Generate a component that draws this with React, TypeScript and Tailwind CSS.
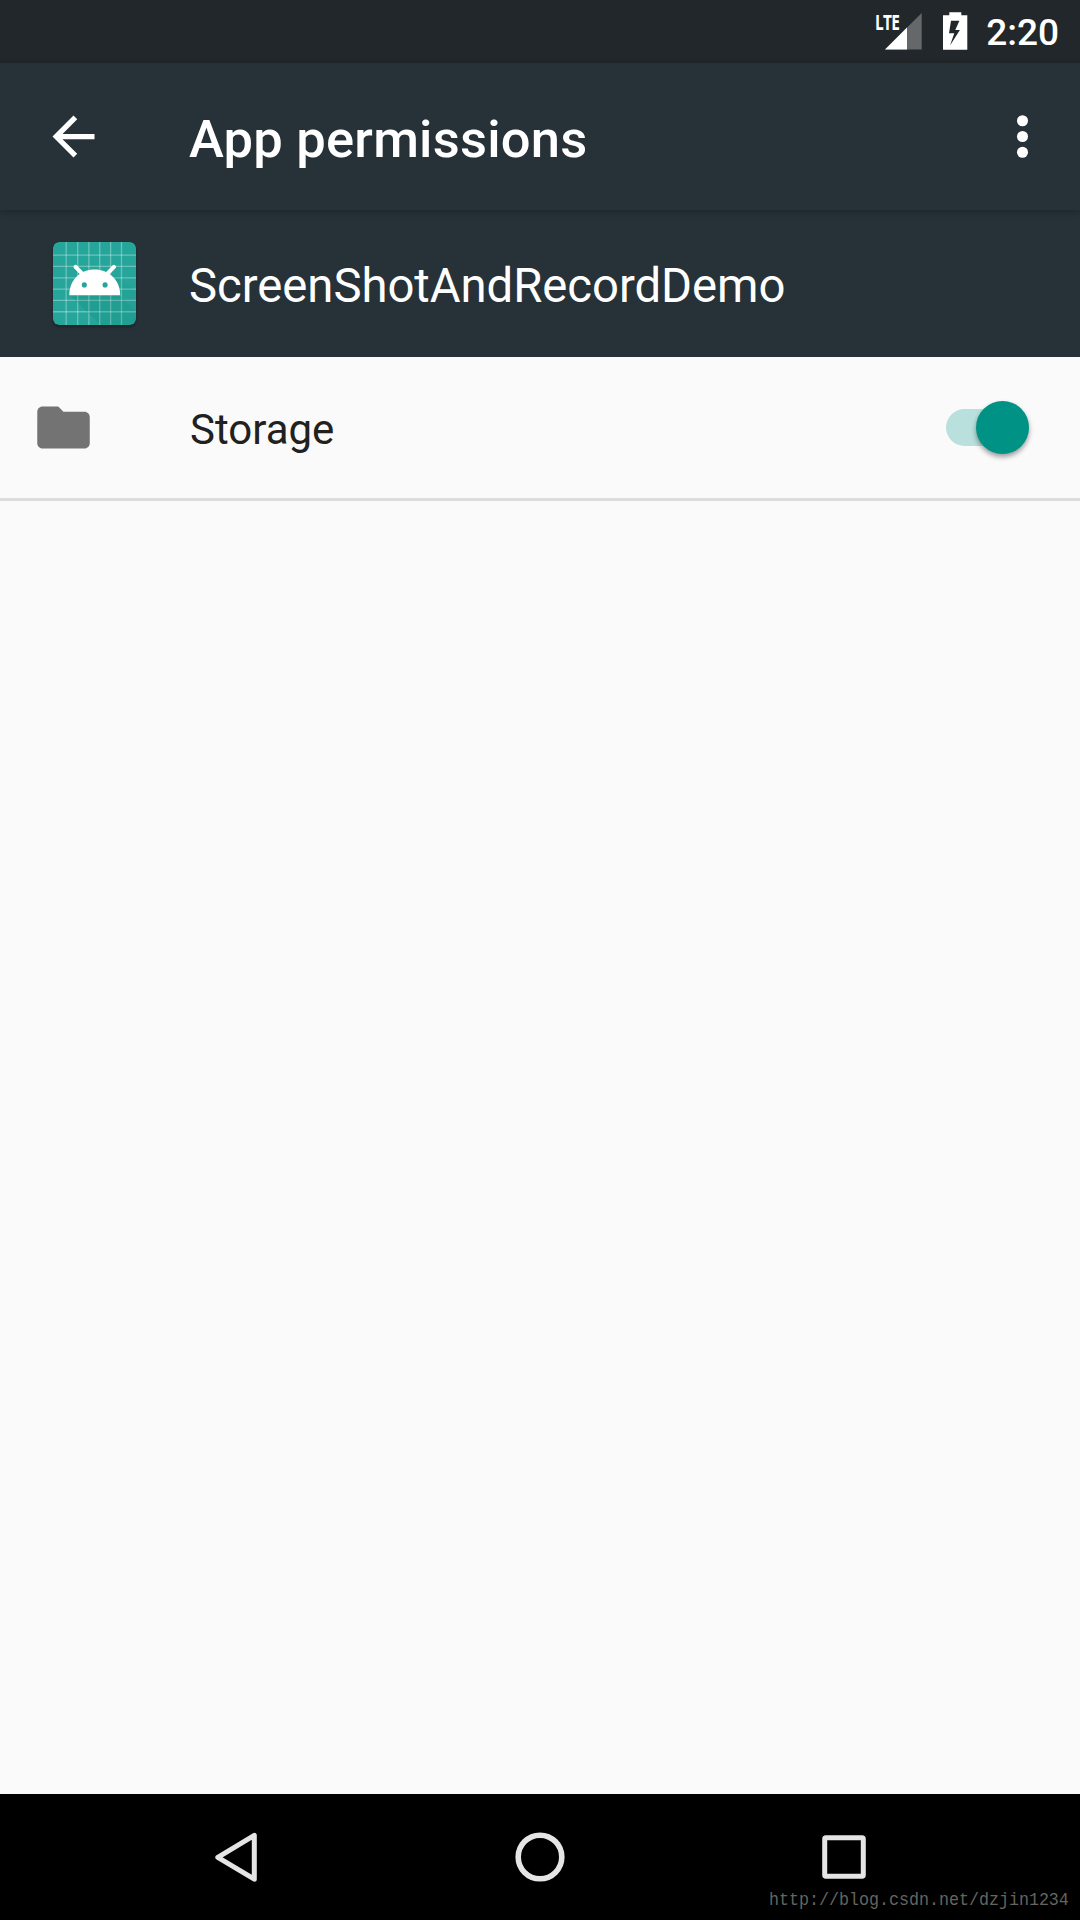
import React from "react";

const GRID = [13.3, 25, 36.3, 47.3, 58.3, 69.3];
const GRID_Y = [13.3, 24.7, 36.3, 47.6, 59, 70.6];

function SignalIcon() {
  return (
    <svg className="block h-[50px] w-[48px]" viewBox="0 0 48 50">
      <path d="M47.7 13V49.5H11z" fill="#64686b" />
      <path d="M33 27.6V49.5H11z" fill="#fff" />
    </svg>
  );
}

function BatteryIcon() {
  return (
    <svg className="block h-[38px] w-[25px]" viewBox="0 0 25 38">
      <path
        fillRule="evenodd"
        fill="#fff"
        d="M6.3 0.3h12v3H24.3V37.8H0V3.3H6.3zM8 8.8L6 21.3H11.3L7 33.6 16.9 18H12.3L16.4 8.8z"
      />
    </svg>
  );
}

function LauncherIcon() {
  return (
    <svg className="block size-[83px] rounded-[6px] shadow-[0_2px_3px_rgba(0,0,0,0.3)]" viewBox="0 0 84 84">
      <rect width="84" height="84" rx="6" fill="#26a69a" />
      <g stroke="#fff" strokeOpacity="0.32" strokeWidth="1.3">
        {GRID.map((x) => (
          <path key={x} d={`M${x} 0V84`} />
        ))}
        {GRID_Y.map((y) => (
          <path key={y} d={`M0 ${y}H84`} />
        ))}
      </g>
      <path d="M16.5 53.3H67L84 70V78Q84 84 78 84H48z" fill="#00695c" opacity="0.13" />
      <path d="M67.5 53L62 33 84 50V70z" fill="#00695c" opacity="0.06" />
      <path d="M22.8 25.2L31.5 34M61.7 25.2L53 34" stroke="#fff" strokeWidth="4.2" strokeLinecap="round" />
      <path d="M16.5 53.8C16.5 38 28 27.8 42 27.8S68 38 68 53.8z" fill="#fff" />
      <circle cx="31.7" cy="43.4" r="2.6" fill="#26a69a" />
      <circle cx="52.7" cy="43.4" r="2.6" fill="#26a69a" />
    </svg>
  );
}

export default function App() {
  return (
    <div className="flex h-[1920px] w-[1080px] flex-col overflow-hidden bg-[#fafafa] font-[Roboto,sans-serif]">
      <div className="flex h-[63px] shrink-0 items-start justify-end bg-[#22272b] pr-[21px] text-white">
        <div className="relative ml-auto">
          <SignalIcon />
          <span className="absolute left-[1px] top-[9px] origin-left scale-x-[0.7] font-['Open_Sans',sans-serif] text-[22px] font-bold leading-[24px] tracking-[-1px]">
            LTE
          </span>
        </div>
        <div className="ml-[21px] mt-[12px]">
          <BatteryIcon />
        </div>
        <span className="mt-[11px] w-[91px] text-right text-[37px] font-medium leading-[44px]">2:20</span>
      </div>

      <header className="relative z-10 flex h-[147px] shrink-0 items-center bg-[#263238] pl-[42px] pr-[26px] text-white shadow-[0_2px_7px_rgba(0,0,0,0.28)]">
        <svg className="block size-[63px]" viewBox="0 0 24 24" fill="currentColor">
          <path d="M20 11H7.83l5.59-5.59L12 4l-8 8 8 8 1.41-1.41L7.83 13H20v-2z" />
        </svg>
        <h1 className="ml-[84px] mt-[4px] text-[52.5px] font-medium leading-[62px] tracking-[0.22px]">App permissions</h1>
        <svg className="ml-auto block size-[63px]" viewBox="0 0 24 24" fill="currentColor">
          <circle cx="12" cy="6" r="2.1" />
          <circle cx="12" cy="12" r="2.1" />
          <circle cx="12" cy="18" r="2.1" />
        </svg>
      </header>

      <div className="flex h-[147px] shrink-0 items-center bg-[#263238] pl-[52.5px] text-white">
        <LauncherIcon />
        <span className="ml-[53.5px] mt-[5px] text-[47.25px] leading-[56px] tracking-[-0.03px]">ScreenShotAndRecordDemo</span>
      </div>

      <div className="flex h-[144px] shrink-0 items-center border-b-[3px] border-[#dcdcdc] pl-[32px] pr-[51px]">
        <svg className="block size-[63px]" viewBox="0 0 24 24" fill="#737373">
          <path d="M10 4H4c-1.1 0-1.99.9-1.99 2L2 18c0 1.1.9 2 2 2h16c1.1 0 2-.9 2-2V8c0-1.1-.9-2-2-2h-8l-2-2z" />
        </svg>
        <span className="ml-[95px] mt-[5px] text-[42px] leading-[50px] text-[#212121]">Storage</span>
        <div className="ml-auto flex h-[37px] w-[83px] items-center justify-end rounded-full bg-[#b9e0dc]">
          <div className="size-[53px] shrink-0 rounded-full bg-[#009385] shadow-[0_3px_5px_rgba(0,0,0,0.38)]" />
        </div>
      </div>

      <main className="flex-1" />

      <nav className="relative flex h-[126px] shrink-0 items-center bg-black pl-[204px]">
        <svg className="block size-[64px]" viewBox="0 0 64 64" fill="none" stroke="#e5e5e5" strokeWidth="5" strokeLinejoin="round">
          <path d="M50.3 10.3V54.2L13.8 32.3z" />
        </svg>
        <svg className="ml-[240px] block size-[64px]" viewBox="0 0 64 64" fill="none" stroke="#e5e5e5" strokeWidth="5.6">
          <circle cx="32" cy="32" r="21.8" />
        </svg>
        <svg className="ml-[240px] block size-[64px]" viewBox="0 0 64 64" fill="none" stroke="#e5e5e5" strokeWidth="5">
          <rect x="12.7" y="12.7" width="38.6" height="38.6" rx="1.2" />
        </svg>
        <span className="absolute left-[769px] top-[94px] origin-left scale-y-[1.15] whitespace-nowrap font-['Liberation_Mono',monospace] text-[16.67px] leading-[24px] text-[#65655f]">
          http://blog.csdn.net/dzjin1234
        </span>
      </nav>
    </div>
  );
}
